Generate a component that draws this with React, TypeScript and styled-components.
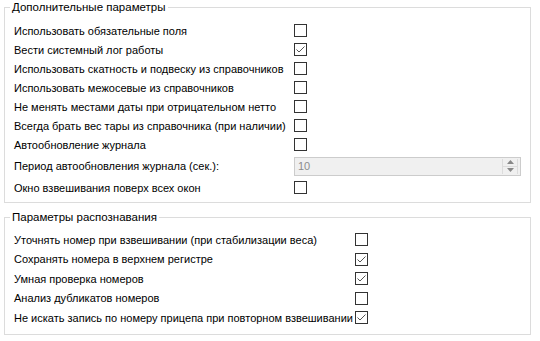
import { Fragment } from 'react';
import styled, { createGlobalStyle } from 'styled-components';

const GlobalStyle = createGlobalStyle`
  html, body {
    margin: 0;
    padding: 0;
    background: #fff;
  }
  body {
    font-family: 'Liberation Sans', Arial, sans-serif;
    font-size: 11px;
    color: #000;
  }
`;

const Page = styled.div`
  width: 540px;
  min-height: 341px;
  padding: 0 9px 0 4px;
  box-sizing: border-box;
  display: flex;
  flex-direction: column;
  gap: 7px;
`;

const Group = styled.fieldset<{ $check: number; $row: number; $top: number; $bottom: number }>`
  flex-shrink: 0;
  margin: 0;
  padding: ${({ $top, $bottom }) => `${$top}px 0 ${$bottom}px 9px`};
  border: 1px solid #dcdcdc;
  display: grid;
  grid-template-columns: ${({ $check }) => `${$check}px 1fr`};
  grid-auto-rows: ${({ $row }) => `minmax(${$row}px, auto)`};
  align-items: center;
  min-width: 0;
`;

const Legend = styled.legend`
  margin-left: -4px;
  padding: 0 2px;
  height: 15px;
  line-height: 15px;
  font-size: 11.5px;
  color: #000;
`;

const Label = styled.span`
  white-space: nowrap;
  line-height: 16px;
`;

const Box = styled.span`
  width: 13px;
  height: 13px;
  box-sizing: border-box;
  border: 1px solid #333;
  background: #fff;
  display: flex;
  align-items: center;
  justify-content: center;

  svg {
    display: block;
  }
`;

const WideRow = styled.div`
  grid-column: 1 / -1;
  display: grid;
  grid-template-columns: 280px 227px;
  align-items: center;
  height: 24px;
`;

const Spin = styled.div`
  height: 19px;
  box-sizing: border-box;
  border: 1px solid #cccccc;
  background: #f0f0f0;
  display: flex;
  align-items: center;
  justify-content: space-between;
  padding: 0 2px 0 3px;
  color: #8c8c8c;
`;

const SpinButtons = styled.div`
  width: 14px;
  height: 15px;
  display: flex;
  flex-direction: column;
  border-left: 1px solid #dcdcdc;
  border-right: 1px solid #dcdcdc;
`;

const SpinButton = styled.div<{ $down?: boolean }>`
  flex: 1;
  display: flex;
  align-items: center;
  justify-content: center;
  border-top: ${({ $down }) => ($down ? '1px solid #dcdcdc' : 'none')};
`;

const Check = ({ checked }: { checked?: boolean }) => (
  <Box>
    {checked && (
      <svg width="11" height="11" viewBox="0 0 11 11">
        <path d="M1.5 5.5 L4 8 L9.5 2.5" fill="none" stroke="#555" strokeWidth="1" />
      </svg>
    )}
  </Box>
);

const extra = [
  { label: 'Использовать обязательные поля', checked: false },
  { label: 'Вести системный лог работы', checked: true },
  { label: 'Использовать скатность и подвеску из справочников', checked: false },
  { label: 'Использовать межосевые из справочников', checked: false },
  { label: 'Не менять местами даты при отрицательном нетто', checked: false },
  { label: 'Всегда брать вес тары из справочника (при наличии)', checked: false },
  { label: 'Автообновление журнала', checked: false },
];

const recognition = [
  { label: 'Уточнять номер при взвешивании (при стабилизации веса)', checked: false },
  { label: 'Сохранять номера в верхнем регистре', checked: true },
  { label: 'Умная проверка номеров', checked: true },
  { label: 'Анализ дубликатов номеров', checked: false },
  { label: 'Не искать запись по номеру прицепа при повторном взвешивании', checked: true },
];

export default function App() {
  return (
    <Page>
      <GlobalStyle />
      <Group $check={280} $row={19} $top={6} $bottom={5}>
        <Legend>Дополнительные параметры</Legend>
        {extra.map(({ label, checked }) => (
          <Fragment key={label}>
            <Label>{label}</Label>
            <Check checked={checked} />
          </Fragment>
        ))}
        <WideRow>
          <Label>Период автообновления журнала (сек.):</Label>
          <Spin>
            <span>10</span>
            <SpinButtons>
              <SpinButton>
                <svg width="7" height="4" viewBox="0 0 7 4">
                  <path d="M3.5 0 L7 4 L0 4 Z" fill="#888" />
                </svg>
              </SpinButton>
              <SpinButton $down>
                <svg width="7" height="4" viewBox="0 0 7 4">
                  <path d="M0 0 L7 0 L3.5 4 Z" fill="#888" />
                </svg>
              </SpinButton>
            </SpinButtons>
          </Spin>
        </WideRow>
        <Label>Окно взвешивания поверх всех окон</Label>
        <Check />
      </Group>
      <Group $check={341} $row={19.5} $top={5} $bottom={6}>
        <Legend>Параметры распознавания</Legend>
        {recognition.map(({ label, checked }) => (
          <Fragment key={label}>
            <Label>{label}</Label>
            <Check checked={checked} />
          </Fragment>
        ))}
      </Group>
    </Page>
  );
}
